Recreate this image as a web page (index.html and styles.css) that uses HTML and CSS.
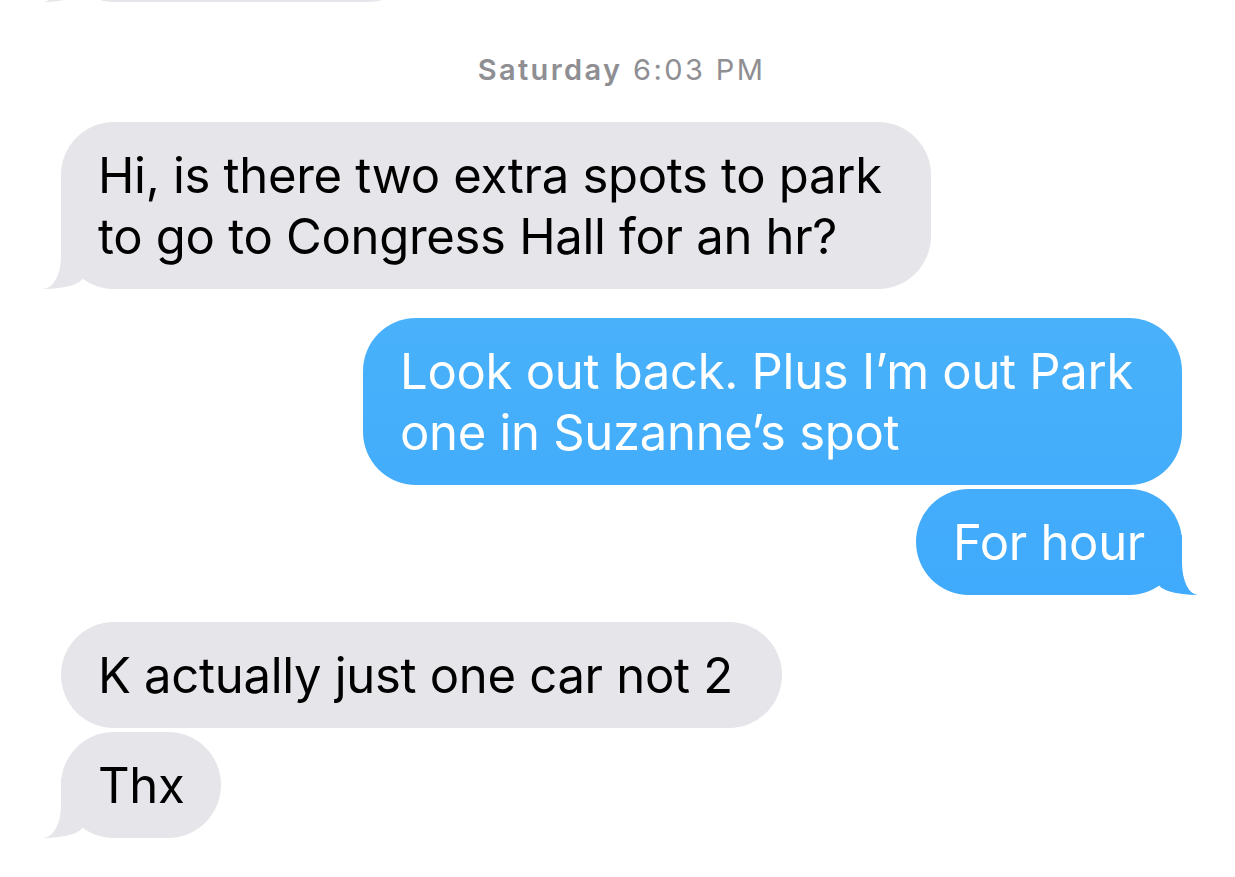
FILE: index.html
```html
<!DOCTYPE html>
<html lang="en">
<head>
<meta charset="utf-8">
<title>Messages</title>
<link rel="stylesheet" href="styles.css">
</head>
<body>
<main class="thread">
  <div class="msg in tail prev"></div>
  <div class="stamp"><span class="day">Saturday</span> 6:03 PM</div>
  <div class="msg in tail first wide">Hi, is there two extra spots to park<br>to go to Congress Hall for an hr?</div>
  <div class="msg out group wide">Look out back. Plus I’m out Park<br>one in Suzanne’s spot</div>
  <div class="msg out tail near">For hour</div>
  <div class="msg in group later wide">K actually just one car not 2</div>
  <div class="msg in tail near">Thx</div>
</main>
</body>
</html>
```

FILE: styles.css
```css
html, body {
  margin: 0;
  padding: 0;
  background: #ffffff;
}

body {
  font-family: Inter, "Noto Sans", "Liberation Sans", sans-serif;
  overflow: hidden;
}

.thread {
  display: flex;
  flex-direction: column;
  align-items: flex-start;
  padding: 0 53px 0 61px;
}

.stamp {
  align-self: center;
  margin-top: 52px;
  font-size: 29px;
  line-height: 32px;
  color: #8e8e93;
  letter-spacing: 2.4px;
}

.stamp .day {
  font-weight: 600;
}

.msg {
  position: relative;
  box-sizing: border-box;
  border-radius: 53px;
  padding: 23px 37px 22px 37px;
  font-size: 49px;
  line-height: 61px;
  letter-spacing: -0.3px;
  white-space: nowrap;
}

.msg.wide {
  padding-right: 49px;
}

.msg.in {
  background: #e5e5ea;
  color: #000000;
}

.msg.out {
  align-self: flex-end;
  color: #ffffff;
  background: linear-gradient(180deg, #53baf9 0px, #37a2fd 877px) fixed;
}

.msg.prev {
  width: 360px;
  height: 106px;
  margin-top: -104px;
  padding: 0;
}

.msg.first {
  margin-top: 36px;
}

.msg.group {
  margin-top: 29px;
}

.msg.group.later {
  margin-top: 27px;
}

.msg.near {
  margin-top: 4px;
}

.msg.tail::before,
.msg.tail::after {
  content: "";
  position: absolute;
  bottom: 0;
  height: 60px;
}

.msg.in.tail::before {
  left: -18px;
  width: 40px;
  background: inherit;
  border-bottom-right-radius: 40px 12px;
}

.msg.in.tail::after {
  left: -30px;
  width: 30px;
  background: #ffffff;
  border-bottom-right-radius: 18px 32px;
}

.msg.out.tail::before {
  right: -16px;
  width: 40px;
  background: inherit;
  border-bottom-left-radius: 40px 12px;
}

.msg.out.tail::after {
  right: -30px;
  width: 30px;
  background: #ffffff;
  border-bottom-left-radius: 16px 32px;
}
```
